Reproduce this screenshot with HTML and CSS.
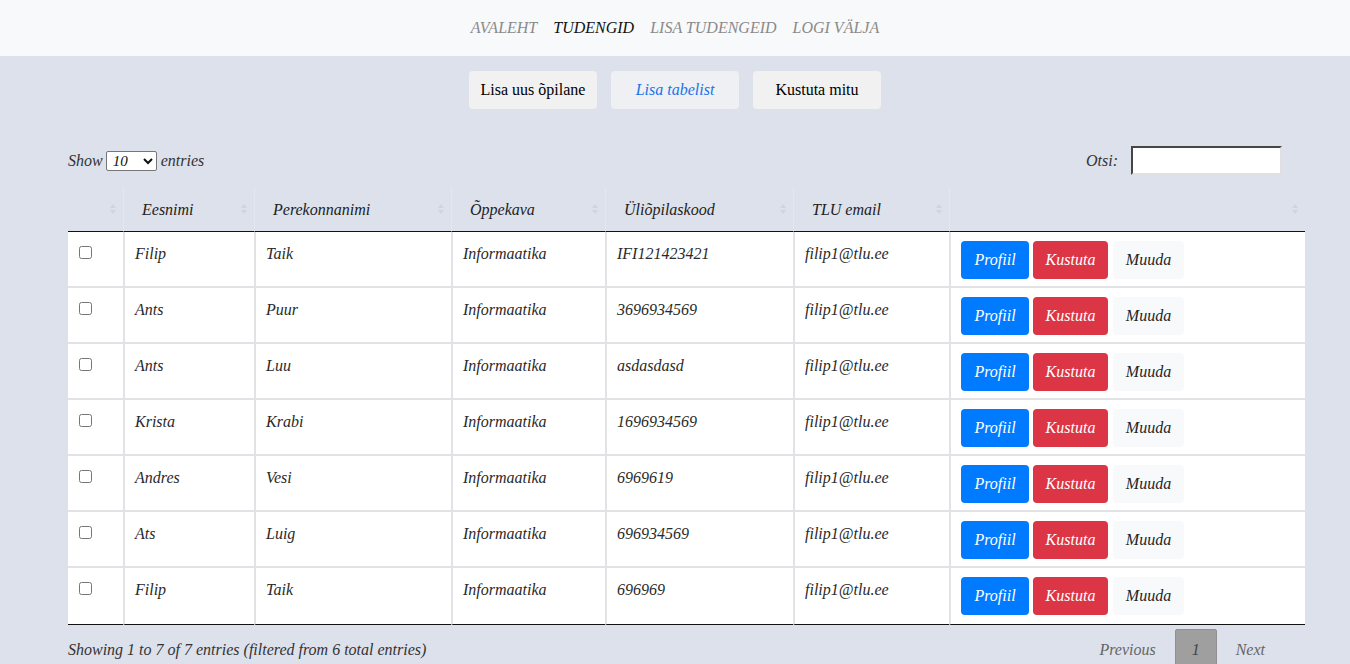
FILE: index.html
```html
<!DOCTYPE html>
<html lang="et">
<head>
<meta charset="utf-8">
<title>Tudengid</title>
<link rel="stylesheet" href="styles.css">
</head>
<body>
<nav class="topnav">
  <a class="navlink">AVALEHT</a>
  <a class="navlink active">TUDENGID</a>
  <a class="navlink">LISA TUDENGEID</a>
  <a class="navlink">LOGI VÄLJA</a>
</nav>

<div class="actions">
  <button class="act">Lisa uus õpilane</button>
  <button class="act link">Lisa tabelist</button>
  <button class="act">Kustuta mitu</button>
</div>

<div class="content">
  <div class="controls">
    <label class="length">Show
      <select class="sel"><option>10</option><option>25</option></select>
      entries</label>
    <label class="search">Otsi: <input class="searchbox" type="text"></label>
  </div>

  <table class="grid">
    <colgroup>
      <col class="c1"><col class="c2"><col class="c3"><col class="c4"><col class="c5"><col class="c6"><col class="c7">
    </colgroup>
    <thead>
      <tr>
        <th><span class="sort"></span></th>
        <th>Eesnimi<span class="sort"></span></th>
        <th>Perekonnanimi<span class="sort"></span></th>
        <th>Õppekava<span class="sort"></span></th>
        <th>Üliõpilaskood<span class="sort"></span></th>
        <th>TLU email<span class="sort"></span></th>
        <th><span class="sort"></span></th>
      </tr>
    </thead>
    <tbody>
      <tr><td><input type="checkbox" class="cb"></td><td>Filip</td><td>Taik</td><td>Informaatika</td><td>IFI121423421</td><td>filip1@tlu.ee</td><td><div class="btns"><button class="b blue">Profiil</button><button class="b red">Kustuta</button><button class="b light">Muuda</button></div></td></tr>
      <tr><td><input type="checkbox" class="cb"></td><td>Ants</td><td>Puur</td><td>Informaatika</td><td>3696934569</td><td>filip1@tlu.ee</td><td><div class="btns"><button class="b blue">Profiil</button><button class="b red">Kustuta</button><button class="b light">Muuda</button></div></td></tr>
      <tr><td><input type="checkbox" class="cb"></td><td>Ants</td><td>Luu</td><td>Informaatika</td><td>asdasdasd</td><td>filip1@tlu.ee</td><td><div class="btns"><button class="b blue">Profiil</button><button class="b red">Kustuta</button><button class="b light">Muuda</button></div></td></tr>
      <tr><td><input type="checkbox" class="cb"></td><td>Krista</td><td>Krabi</td><td>Informaatika</td><td>1696934569</td><td>filip1@tlu.ee</td><td><div class="btns"><button class="b blue">Profiil</button><button class="b red">Kustuta</button><button class="b light">Muuda</button></div></td></tr>
      <tr><td><input type="checkbox" class="cb"></td><td>Andres</td><td>Vesi</td><td>Informaatika</td><td>6969619</td><td>filip1@tlu.ee</td><td><div class="btns"><button class="b blue">Profiil</button><button class="b red">Kustuta</button><button class="b light">Muuda</button></div></td></tr>
      <tr><td><input type="checkbox" class="cb"></td><td>Ats</td><td>Luig</td><td>Informaatika</td><td>696934569</td><td>filip1@tlu.ee</td><td><div class="btns"><button class="b blue">Profiil</button><button class="b red">Kustuta</button><button class="b light">Muuda</button></div></td></tr>
      <tr><td><input type="checkbox" class="cb"></td><td>Filip</td><td>Taik</td><td>Informaatika</td><td>696969</td><td>filip1@tlu.ee</td><td><div class="btns"><button class="b blue">Profiil</button><button class="b red">Kustuta</button><button class="b light">Muuda</button></div></td></tr>
    </tbody>
  </table>

  <div class="footer">
    <div class="info">Showing 1 to 7 of 7 entries (filtered from 6 total entries)</div>
    <div class="paging">
      <span class="pg">Previous</span>
      <span class="pg current">1</span>
      <span class="pg">Next</span>
    </div>
  </div>
</div>
</body>
</html>
```

FILE: styles.css
```css
html, body {
  margin: 0;
  padding: 0;
}
body {
  background: #dce1ec;
  font-family: "Liberation Serif", "Times New Roman", serif;
  font-size: 16px;
  font-style: italic;
  color: #212529;
  line-height: 1.5;
  overflow: hidden;
  height: 664px;
}

.topnav {
  height: 56px;
  background: #f8f9fa;
  display: flex;
  justify-content: center;
  align-items: center;
}
.navlink {
  color: #8a8a8a;
  padding: 0 8px;
  font-size: 16px;
}
.navlink.active {
  color: #111;
}

.actions {
  display: flex;
  justify-content: center;
  gap: 14px;
  margin-top: 15px;
}
.act {
  width: 128px;
  height: 38px;
  border: none;
  border-radius: 4px;
  background: #f1f1f1;
  font-family: "Liberation Serif", "Times New Roman", serif;
  font-size: 16px;
  font-style: normal;
  color: #000;
  padding: 0;
}
.act.link {
  color: #1a73e8;
  font-style: italic;
  background: #eef0f3;
}

.content {
  width: 1214px;
  margin: 0 auto;
}

.controls {
  display: flex;
  justify-content: space-between;
  align-items: center;
  margin-top: 37px;
  height: 29px;
  color: #333;
}
.length {
  display: flex;
  align-items: center;
  gap: 4px;
}
.sel {
  width: 51px;
  height: 20px;
  font-family: "Liberation Serif", serif;
  font-style: italic;
  font-size: 15px;
  padding: 0 0 0 2px;
  border: 1px solid #767676;
  border-radius: 2px;
  background: #fff;
  color: #111;
  margin-left: -1px;
}
.search {
  display: flex;
  align-items: center;
  gap: 13px;
}
.searchbox {
  width: 151px;
  height: 29px;
  box-sizing: border-box;
  border: 2px inset #9a9a9a;
  border-right-color: #e0e0e0;
  border-bottom-color: #e0e0e0;
  background: #fff;
  margin: 0;
}

.grid {
  width: 1237px;
  table-layout: fixed;
  border-collapse: separate;
  border-spacing: 0;
  margin-top: 12px;
}
.c1 { width: 55px; }
.c2 { width: 131px; }
.c3 { width: 197px; }
.c4 { width: 154px; }
.c5 { width: 188px; }
.c6 { width: 156px; }
.c7 { width: 356px; }

.grid th {
  position: relative;
  text-align: left;
  font-weight: normal;
  padding: 11px 18px 9px 18px;
  height: 24px;
  border-bottom: 1px solid #111;
  border-left: 1px solid #e3e7ef;
  color: #222;
}
.grid th:first-child {
  border-left: none;
}
.sort {
  position: absolute;
  right: 6px;
  top: 50%;
  width: 8px;
  height: 14px;
  margin-top: -7px;
  opacity: 0.5;
}
.sort::before,
.sort::after {
  content: "";
  position: absolute;
  left: 1px;
  border-left: 3px solid transparent;
  border-right: 3px solid transparent;
}
.sort::before {
  top: 2px;
  border-bottom: 4px solid #c3c9d3;
}
.sort::after {
  bottom: 2px;
  border-top: 4px solid #c3c9d3;
}

.grid td {
  background: #fff;
  padding: 10px 10px 6px 10px;
  vertical-align: top;
  border-left: 2px solid #e2e2e6;
  border-bottom: 2px solid #e2e2e6;
  color: #2a2a2a;
  height: 38px;
  white-space: nowrap;
  overflow: hidden;
}
.grid td:first-child {
  border-left: none;
}
.grid tbody tr:last-child td {
  padding-bottom: 8px;
  border-bottom: 1px solid #111;
}
.cb {
  margin: 4px 0 0 1px;
  width: 13px;
  height: 13px;
}

.btns {
  display: flex;
  gap: 4px;
  margin-top: -1px;
}
.b {
  height: 38px;
  border: 1px solid transparent;
  border-radius: 4px;
  padding: 0;
  font-family: "Liberation Serif", "Times New Roman", serif;
  font-style: italic;
  font-size: 16px;
}
.b.blue {
  background: #007bff;
  color: #fff;
  width: 68px;
}
.b.red {
  background: #dc3545;
  color: #fff;
  width: 75px;
}
.b.light {
  background: #f8f9fa;
  color: #212529;
  width: 71px;
  margin-left: 1px;
}

.footer {
  display: flex;
  justify-content: space-between;
  align-items: flex-start;
}
.info {
  padding-top: 13px;
  color: #333;
}
.paging {
  display: flex;
  gap: 2px;
  padding-top: 4px;
  margin-right: 0;
}
.pg {
  padding: 8px 16px;
  border: 1px solid transparent;
  color: #666;
  line-height: 24px;
}
.pg.current {
  background: #9f9f9f;
  border-color: #8f8f8f;
  color: #444;
  border-radius: 2px;
}
```
